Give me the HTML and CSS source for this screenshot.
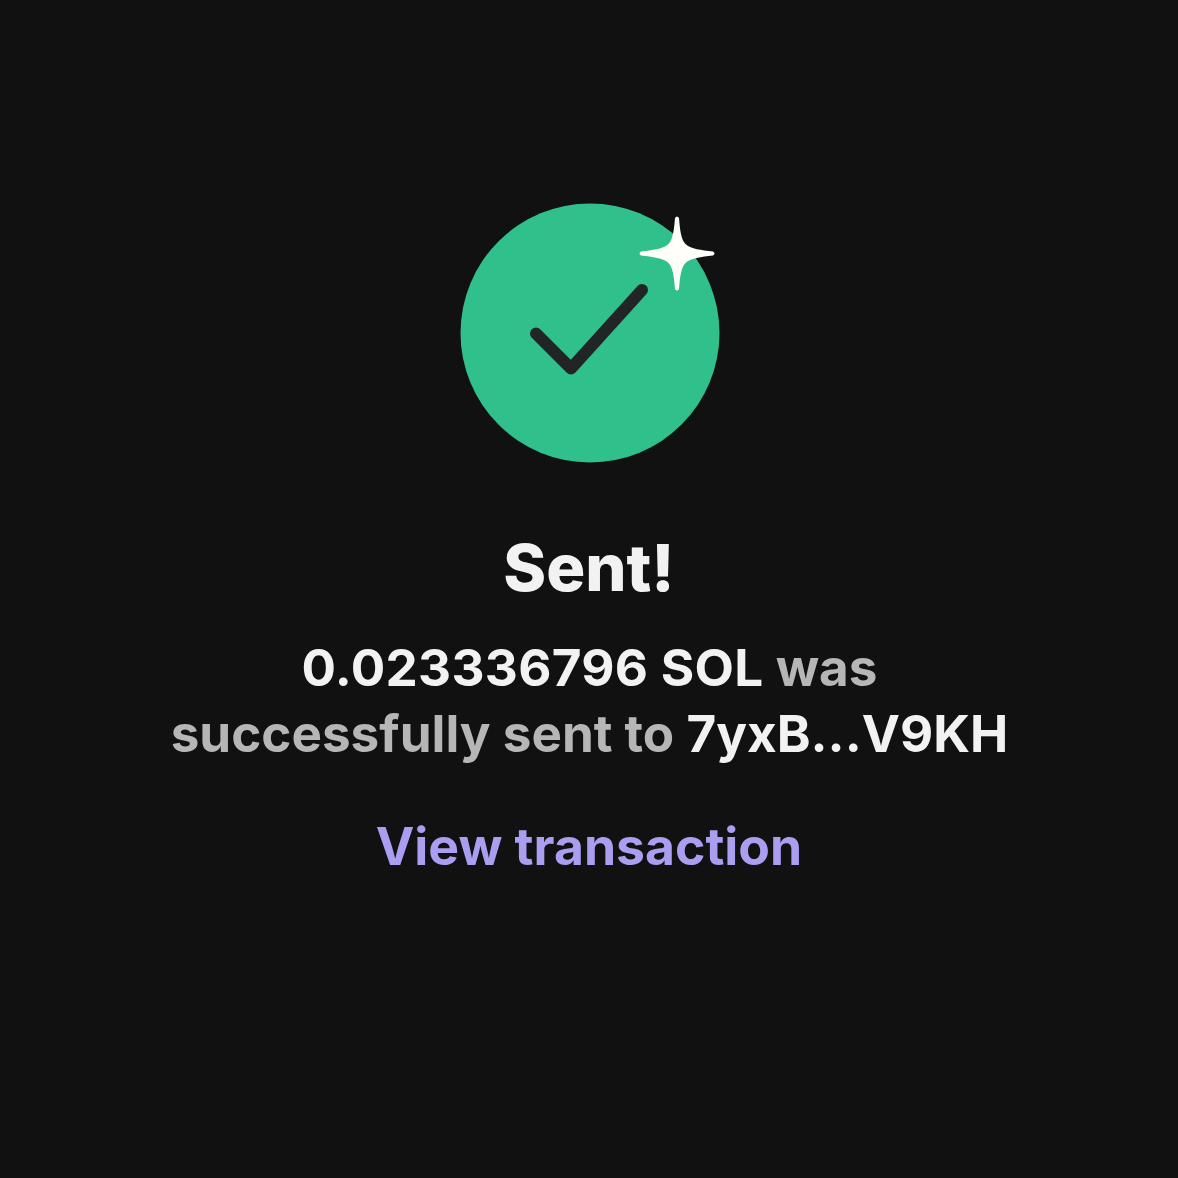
FILE: index.html
```html
<!DOCTYPE html>
<html lang="en">
<head>
    <meta charset="UTF-8">
    <title>Sent!</title>
    <link rel="stylesheet" href="styles.css">
</head>
<body>
    <main class="screen">
        <div class="badge">
            <svg class="badge-icon" viewBox="0 0 260 260" width="260" height="260">
                <circle cx="130" cy="130" r="129.5" fill="#30c08b"/>
                <path d="M76 130.5 L111 165.5 L182 87" fill="none" stroke="#222526" stroke-width="12" stroke-linecap="round" stroke-linejoin="round"/>
            </svg>
            <svg class="sparkle" viewBox="0 0 76 76" width="76" height="76">
                <path d="M36 2 Q38 -1 40 2 C41 14 42 24 47 28.5 C52 33 62 34 74 35.5 Q77 37.5 74 39.5 C62 41 52 42 47 46.5 C42 51 41 61 40 73 Q38 76 36 73 C35 61 34 51 29 46.5 C24 42 14 41 2 39.5 Q-1 37.5 2 35.5 C14 34 24 33 29 28.5 C34 24 35 14 36 2 Z" fill="#fffefb"/>
            </svg>
        </div>
        <h1 class="title">Sent!</h1>
        <p class="message"><span class="strong amount">0.023336796 SOL</span> was<br>successfully sent to <span class="strong">7yxB...V9KH</span></p>
        <a class="link" href="#">View transaction</a>
    </main>
</body>
</html>
```

FILE: styles.css
```css
html, body {
    margin: 0;
    height: 100%;
}
body {
    background-color: #111111;
    font-family: Inter, "Liberation Sans", sans-serif;
}
.screen {
    display: flex;
    flex-direction: column;
    align-items: center;
    padding-top: 203px;
}
.badge {
    position: relative;
    width: 260px;
    height: 260px;
    margin-left: 2px;
}
.badge-icon {
    display: block;
}
.sparkle {
    position: absolute;
    top: 13px;
    left: 179px;
}
.title {
    margin: 69px 0 0;
    font-size: 65px;
    line-height: 72px;
    font-weight: 800;
    color: #f2f2f2;
}
.message {
    margin: 30px 0 0 1px;
    font-size: 51.2px;
    line-height: 66px;
    font-weight: 700;
    text-align: center;
    color: #b6b6b6;
}
.strong {
    color: #f2f2f2;
}
.amount {
    letter-spacing: 0.3px;
}
.link {
    margin-top: 47px;
    font-size: 51.7px;
    line-height: 66px;
    font-weight: 700;
    color: #a99ef0;
    text-decoration: none;
}
```
